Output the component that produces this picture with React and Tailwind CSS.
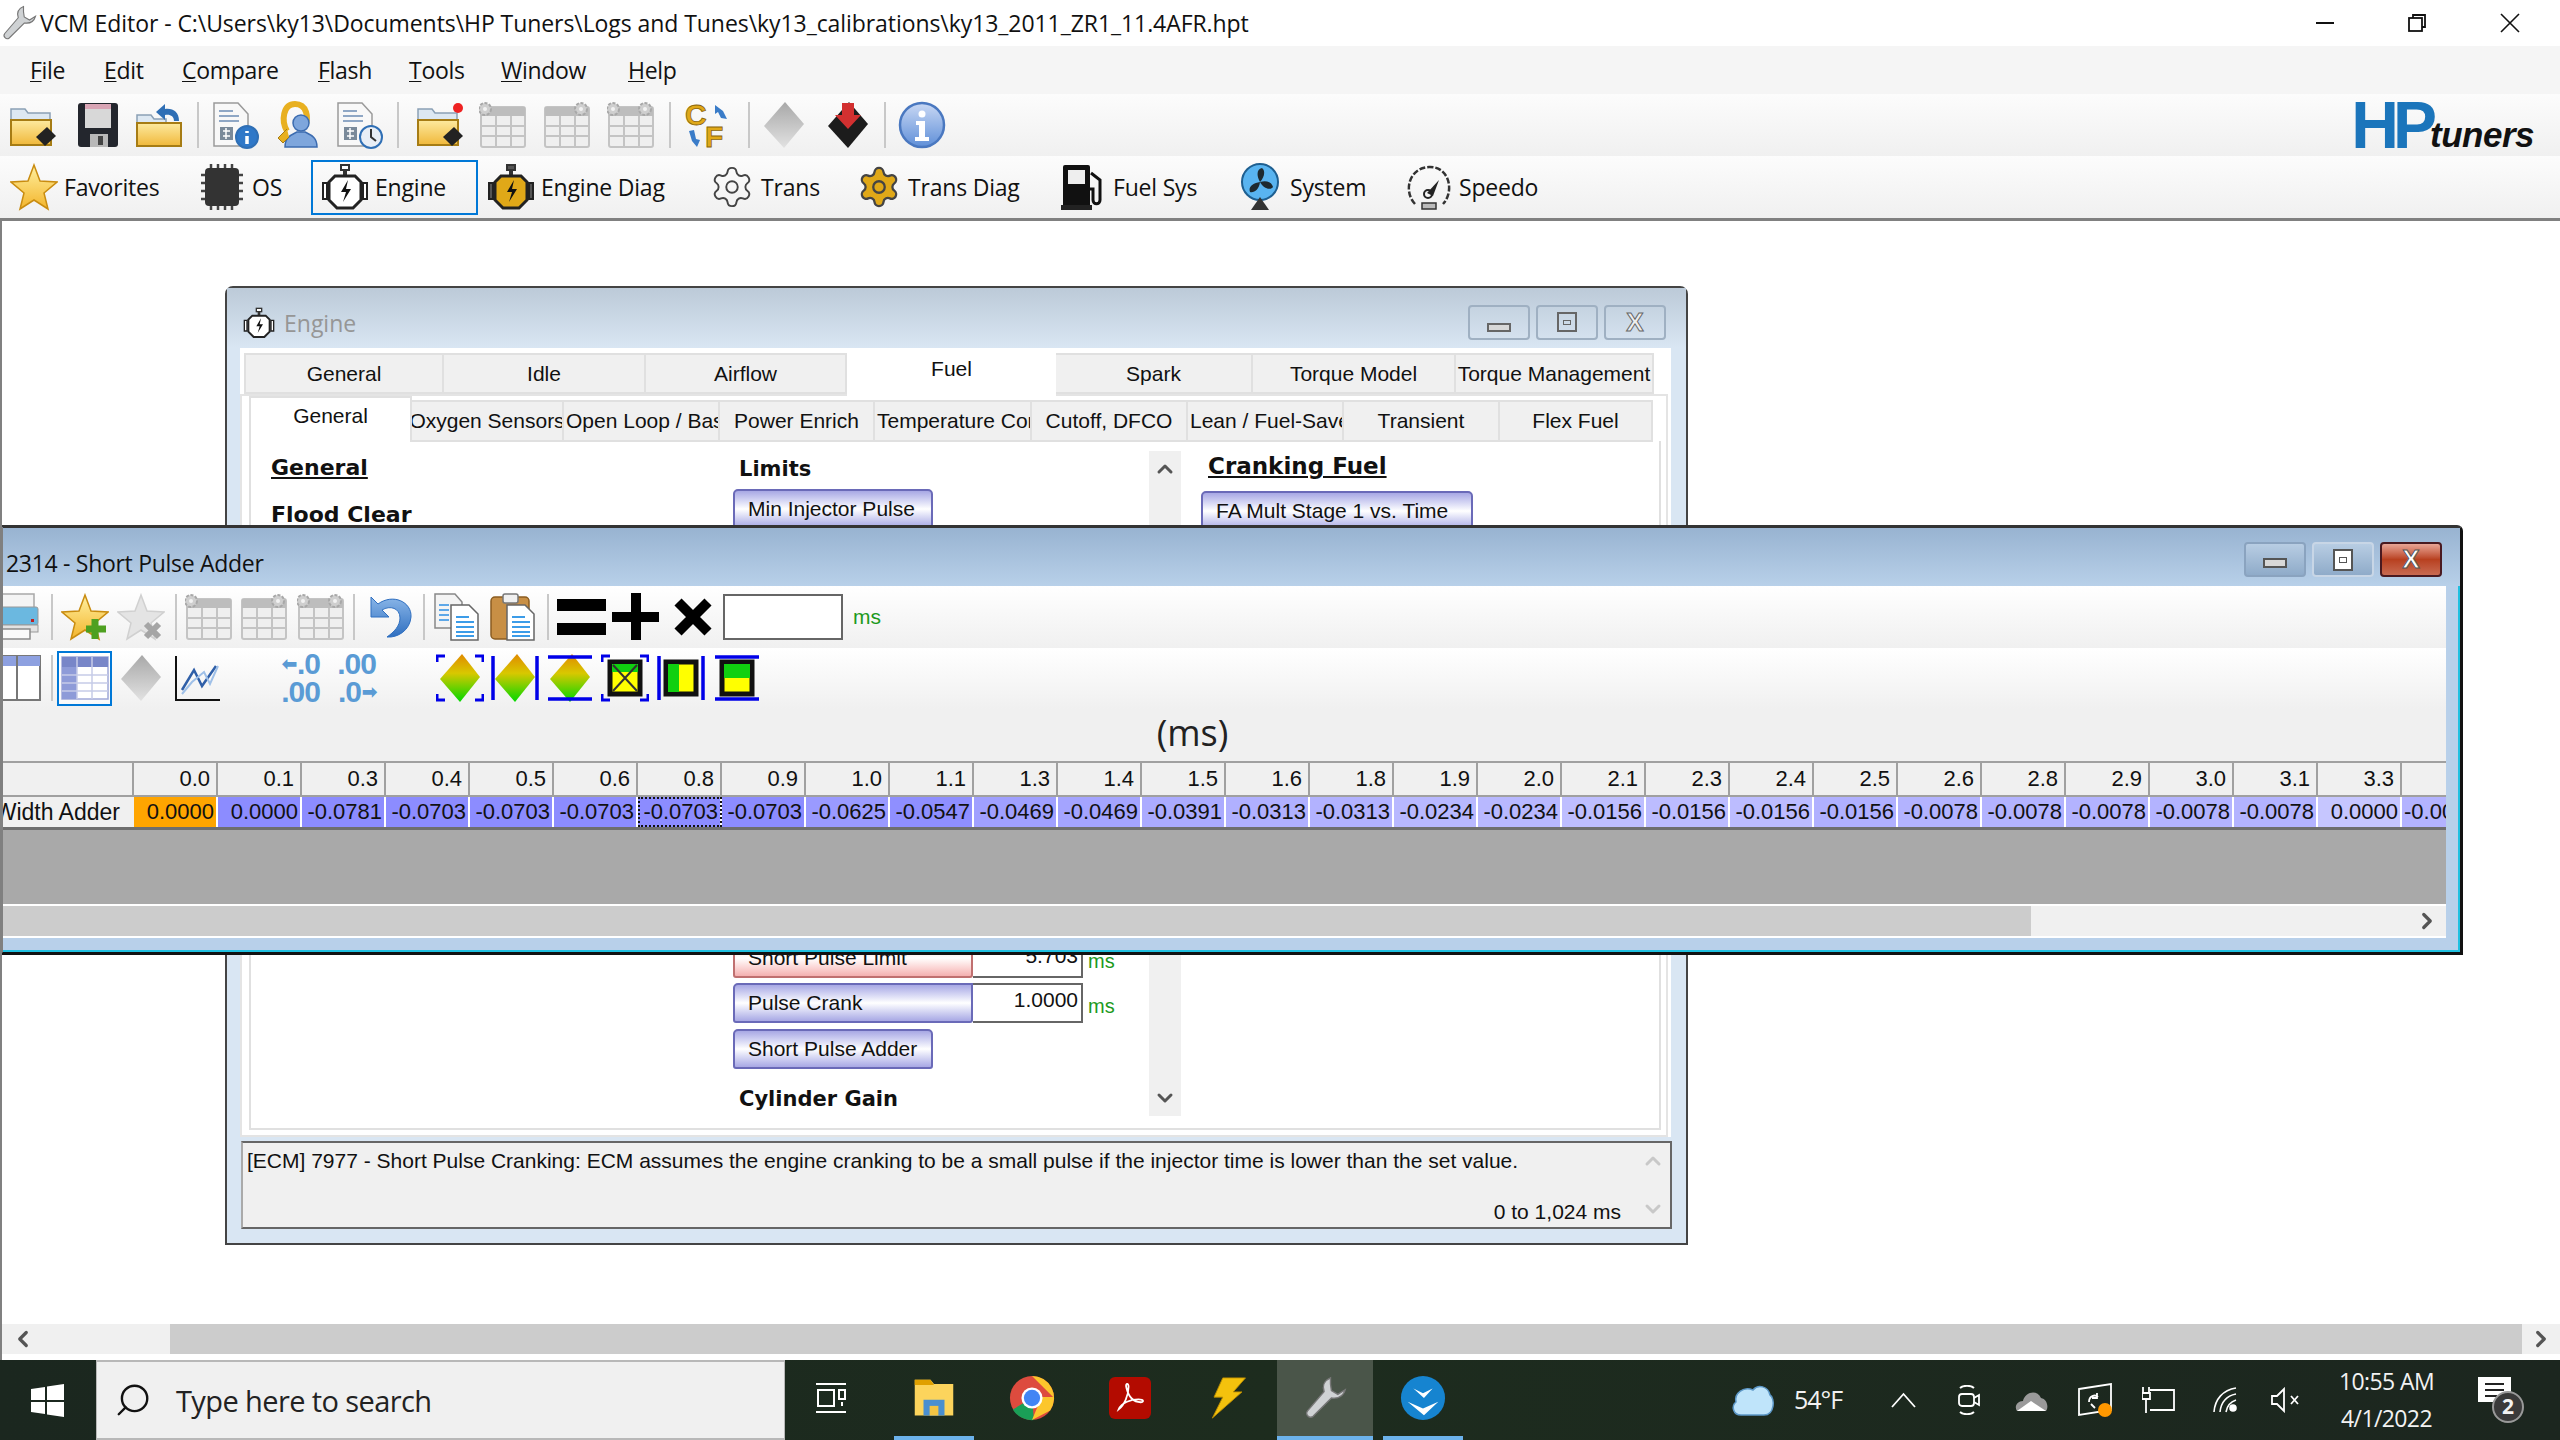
import React from 'react';
import { ChevronUp, ChevronDown, ChevronLeft, ChevronRight, Settings, Search } from 'lucide-react';

const Ic = ({ className = 'w-12 h-12', children }) => (
  <svg viewBox="0 0 48 48" className={`shrink-0 ${className}`}>{children}</svg>
);

const Defs = () => (
  <svg className="absolute w-0 h-0">
    <defs>
      <linearGradient id="folder" x1="0" y1="0" x2="0" y2="1"><stop offset="0" stopColor="#fdeaa0" /><stop offset="1" stopColor="#f0b83a" /></linearGradient>
      <linearGradient id="star" x1="0" y1="0" x2="0" y2="1"><stop offset="0" stopColor="#fff0a0" /><stop offset="1" stopColor="#f3b52c" /></linearGradient>
      <linearGradient id="heat" x1="0" y1="0" x2="0" y2="1"><stop offset="0" stopColor="#e08a00" /><stop offset="0.4" stopColor="#d8c800" /><stop offset="1" stopColor="#00d800" /></linearGradient>
      <linearGradient id="grayChip" x1="0" y1="0" x2="0" y2="1"><stop offset="0" stopColor="#a8a8a8" /><stop offset="1" stopColor="#e2e2e2" /></linearGradient>
      <linearGradient id="info" x1="0" y1="0" x2="0" y2="1"><stop offset="0" stopColor="#c9d8f4" /><stop offset="1" stopColor="#5f8fd8" /></linearGradient>
      <linearGradient id="undo" x1="0" y1="0" x2="0" y2="1"><stop offset="0" stopColor="#8ab6e8" /><stop offset="1" stopColor="#2f6fc0" /></linearGradient>
    </defs>
  </svg>
);

const FolderOpen = ({ spark }) => (
  <Ic>
    <path d="M2 8h14l3 4h22v14H2z" fill="#dde8f2" stroke="#8aa0b5" strokeWidth="1.5" />
    <rect x="2" y="19" width="40" height="25" fill="url(#folder)" stroke="#a67c14" strokeWidth="2" />
    <polygon points="27,36 38,26 47,35 36,45" fill="#222" />
    {spark && <circle cx="42" cy="7" r="5" fill="#ee2222" />}
  </Ic>
);
const Save = () => (
  <Ic>
    <rect x="4" y="2" width="40" height="44" rx="3" fill="#23262d" />
    <rect x="11" y="3" width="26" height="24" fill="#d8d8d8" />
    <rect x="11" y="3" width="26" height="5" fill="#d9a5b5" />
    <rect x="16" y="33" width="18" height="13" fill="#b8b8b8" />
    <rect x="24" y="35" width="5" height="9" fill="#444" />
  </Ic>
);
const FolderBack = () => (
  <Ic>
    <path d="M2 14h14l3 4h12v8H2z" fill="#dde8f2" stroke="#8aa0b5" strokeWidth="1.5" />
    <rect x="2" y="22" width="44" height="23" fill="url(#folder)" stroke="#a67c14" strokeWidth="2" />
    <path d="M44 20c0-9-6-13-14-12V3l-9 8 9 8v-5c5-1 9 1 9 6z" fill="#2f6fb5" />
  </Ic>
);
const DocBadge = ({ clock }) => (
  <Ic>
    <path d="M3 2h24l10 11v32H3z" fill="#f8f8f8" stroke="#9a9a9a" strokeWidth="1.5" />
    <path d="M8 10h14M8 15h20M8 20h20" stroke="#8fa7c5" strokeWidth="2" />
    <rect x="9" y="26" width="13" height="13" fill="#7a8a9a" />
    <path d="M12 30h7M12 35h7M15 27v11" stroke="#fff" strokeWidth="1.5" />
    <circle cx="36" cy="36" r="11" fill={clock ? '#e8eef6' : '#2f78c8'} stroke="#2f6fb5" strokeWidth="2" />
    {clock ? <path d="M36 28v8l5 4" stroke="#333" strokeWidth="2" fill="none" /> : <path d="M36 30v2M36 35v8" stroke="#fff" strokeWidth="3.5" />}
  </Ic>
);
const KeyUser = () => (
  <Ic>
    <path d="M14 30C8 20 10 3 22 3s14 14 10 22" fill="none" stroke="#e8b020" strokeWidth="6" />
    <circle cx="28" cy="22" r="8" fill="#7ea6dc" stroke="#3c6cb0" strokeWidth="1.5" />
    <path d="M12 46c0-10 6-12 12-15h8c6 3 12 5 12 15z" fill="#7ea6dc" stroke="#3c6cb0" strokeWidth="1.5" />
    <path d="M14 28l-9 9 5 5 6-6" fill="#e8b020" stroke="#a67c14" />
  </Ic>
);
const GrayTable = ({ gears = [] }) => (
  <Ic>
    <rect x="2" y="6" width="44" height="40" rx="2" fill="#efefef" stroke="#c4c4c4" strokeWidth="2" />
    <rect x="2" y="6" width="44" height="9" fill="#bdbdbd" />
    <path d="M2 25h44M2 35h44M17 15v30M32 15v30" stroke="#c4c4c4" strokeWidth="2" />
    {gears.map((x) => (
      <g key={x}>
        <circle cx={x} cy="8" r="6" fill="#cfcfcf" stroke="#a8a8a8" strokeWidth="2" strokeDasharray="3 1.5" />
        <circle cx={x} cy="8" r="2" fill="#f2f2f2" />
      </g>
    ))}
  </Ic>
);
const CF = () => (
  <Ic>
    <text x="0" y="24" fontFamily="Liberation Sans" fontWeight="700" fontSize="30" fill="#e0a818" stroke="#8a6508" strokeWidth="0.8">C</text>
    <text x="20" y="46" fontFamily="Liberation Sans" fontWeight="700" fontSize="30" fill="#e0a818" stroke="#8a6508" strokeWidth="0.8">F</text>
    <path d="M30 4l8 6 4 8-6-1-3-6-3 2z" fill="#3a7cc8" />
    <path d="M4 30l3 10 5 6 3-7-4-1-2-9z" fill="#3a7cc8" />
  </Ic>
);
const ChipDiamond = ({ red, gray, className }) => (
  <Ic className={className}>
    <polygon points="25,1 44,23 24,47 4,25" fill={red ? '#1c1c1c' : gray ? 'url(#grayChip)' : '#999'} />
    {red && <path d="M18 2h12v12h7L24 28 11 14h7z" fill="#d23030" />}
  </Ic>
);
const Info = () => (
  <Ic>
    <circle cx="24" cy="24" r="22" fill="url(#info)" stroke="#4a78c0" strokeWidth="2.5" />
    <circle cx="24" cy="13" r="3.5" fill="#fff" />
    <path d="M18 20h9v16h4v4H17v-4h4V24h-3z" fill="#fff" />
  </Ic>
);
const Star = ({ gray, badge }) => (
  <Ic>
    <polygon points="24,2 30,18 47,19 34,30 38,46 24,37 10,46 14,30 1,19 18,18" fill={gray ? '#e4e4e4' : 'url(#star)'} stroke={gray ? '#d0d0d0' : '#c98c10'} strokeWidth="1.5" />
    {badge === 'plus' && <path d="M34 26v20M25 36h20" stroke="#4ea020" strokeWidth="7" />}
    {badge === 'x' && <path d="M29 31l13 13M42 31L29 44" stroke="#a5a5a5" strokeWidth="6" />}
  </Ic>
);
const Chip = () => (
  <Ic>
    <rect x="7" y="5" width="34" height="38" rx="4" fill="#333" />
    <path d="M13 1v4M20 1v4M27 1v4M34 1v4M13 43v4M20 43v4M27 43v4M34 43v4M3 12h4M3 20h4M3 28h4M3 36h4M41 12h4M41 20h4M41 28h4M41 36h4" stroke="#444" strokeWidth="2.5" />
  </Ic>
);
const EngineIcon = ({ gold, className }) => (
  <Ic className={className}>
    <rect x="20" y="2" width="8" height="5" fill={gold ? '#555' : '#fff'} stroke="#333" strokeWidth="2" />
    <rect x="22" y="7" width="4" height="6" fill="#333" />
    <path d="M14 13h20l6 6v18l-8 8H16l-8-8V19z" fill={gold ? '#e0a818' : '#fff'} stroke="#222" strokeWidth="3" />
    <path d="M2 20h4v16H2zM42 20h4v16h-4z" fill={gold ? '#555' : '#fff'} stroke="#222" strokeWidth="2" />
    <path d="M27 17l-7 12h5l-3 10 8-13h-5z" fill="#111" />
  </Ic>
);
const Fuel = () => (
  <Ic>
    <rect x="4" y="2" width="27" height="43" rx="2" fill="#111" />
    <rect x="9" y="7" width="17" height="14" fill="#eee" />
    <rect x="2" y="42" width="31" height="5" fill="#222" />
    <path d="M32 10l9 7v20c0 5-7 5-7 0V26h-3" fill="none" stroke="#111" strokeWidth="3" />
  </Ic>
);
const Fan = () => (
  <Ic>
    <circle cx="24" cy="19" r="18" fill="#59b4f0" stroke="#1e5f90" strokeWidth="2" />
    <path d="M24 19C20 12 21 6 26 5c4 3 2 10-2 14zM24 19c8-2 12 1 13 5-3 4-10 1-13-5zM24 19c-1 8-6 11-10 10-2-5 3-9 10-10z" fill="#1e2a30" />
    <polygon points="24,34 33,47 15,47" fill="#333" />
  </Ic>
);
const Speedo = () => (
  <Ic>
    <path d="M10 41C-2 28 4 5 24 4s26 24 14 37" fill="none" stroke="#333" strokeWidth="2.5" strokeDasharray="6 2" />
    <path d="M22 30l12-13-6 16z" fill="#222" />
    <circle cx="23" cy="31" r="4" fill="none" stroke="#222" strokeWidth="2" />
    <rect x="17" y="40" width="14" height="6" fill="#bbb" stroke="#333" strokeWidth="1.5" />
  </Ic>
);
const Printer = () => (
  <Ic>
    <rect x="-6" y="1" width="40" height="14" fill="#f4f4f4" stroke="#a8a8a8" strokeWidth="1.5" />
    <rect x="-10" y="14" width="48" height="18" rx="2" fill="#6bb8e0" stroke="#999" />
    <rect x="-10" y="32" width="48" height="7" fill="#e2e2e2" stroke="#999" />
    <rect x="-6" y="36" width="36" height="10" fill="#fafafa" stroke="#8a8a8a" strokeWidth="1.5" />
    <rect x="31" y="26" width="3" height="3" fill="#c02020" />
  </Ic>
);
const Undo = () => (
  <Ic>
    <path d="M6 4l0 20 18 0-7-7c8-5 18-2 18 8 0 8-6 14-13 19 11 1 23-7 24-20C47 9 28 0 13 11z" fill="url(#undo)" stroke="#2f6fc0" strokeWidth="1" />
  </Ic>
);
const DocLines = ({ x, y }) => (
  <g transform={`translate(${x} ${y})`}>
    <path d="M0 0h18l9 9v26H0z" fill="#fff" stroke="#666" strokeWidth="1.5" />
    <path d="M5 12h13M5 17h18M5 22h18M5 27h18M5 31h18" stroke="#3c9ce8" strokeWidth="2" />
  </g>
);
const Copy = () => (
  <Ic>
    <path d="M1 1h20l7 8v26H1z" fill="#f4f4f4" stroke="#888" strokeWidth="1.5" />
    <path d="M5 12h10M5 17h10M5 22h10M5 27h10" stroke="#5ea8e8" strokeWidth="2" />
    <DocLines x="17" y="12" />
  </Ic>
);
const Paste = () => (
  <Ic>
    <rect x="1" y="4" width="38" height="42" rx="4" fill="#c88f45" stroke="#8a5c20" strokeWidth="1.5" />
    <rect x="13" y="1" width="15" height="9" rx="2" fill="#f0f0f0" stroke="#777" strokeWidth="1.5" />
    <DocLines x="17" y="12" />
  </Ic>
);
const WinSplit = () => (
  <Ic>
    <rect x="-6" y="2" width="46" height="44" fill="#fff" stroke="#777" strokeWidth="2" />
    <rect x="-6" y="2" width="46" height="10" fill="#8da0e0" />
    <path d="M17 2v44" stroke="#777" strokeWidth="2" />
  </Ic>
);
const SheetIcon = () => (
  <Ic>
    <rect x="1" y="3" width="46" height="42" fill="#fff" stroke="#a0a8d8" strokeWidth="1.5" />
    <rect x="1" y="3" width="46" height="10" fill="#7886c8" />
    <rect x="1" y="13" width="15" height="32" fill="#8e9bd8" />
    <path d="M16 3v42M31 3v42M1 21h46M1 29h46M1 37h46" stroke="#c6cce8" strokeWidth="1.5" />
  </Ic>
);
const Chart = () => (
  <Ic>
    <path d="M2 2v44h44" fill="none" stroke="#111" strokeWidth="2" />
    <path d="M8 36l12-20 8 16 14-20" fill="none" stroke="#2f5fa8" strokeWidth="2.5" />
    <path d="M8 40l10-12 12-10 6 12 8-18" fill="none" stroke="#9fc0e8" strokeWidth="2" />
  </Ic>
);
const Deci = ({ top, arrow }) => (
  <span className="flex w-[46px] h-[22px] items-center justify-end gap-[1px] text-[30px] leading-none font-bold tracking-[-1px] text-[#5a9bd5]">
    {arrow === 'left' && <span className="text-[18px]">⬅</span>}
    {top}
    {arrow === 'right' && <span className="text-[18px]">➡</span>}
  </span>
);
const Brackets = ({ kind }) => (
  <>
    {kind === 'corners' && <path d="M1 8V2h8M47 8V2h-8M1 40v6h8M47 40v6h-8" fill="none" stroke="#0000e8" strokeWidth="3" />}
    {kind === 'sides' && <path d="M2 2v44M46 2v44" stroke="#0000e8" strokeWidth="3.5" />}
    {kind === 'bars' && <path d="M2 3h44M2 45h44" stroke="#0000e8" strokeWidth="3.5" />}
  </>
);
const Heat = ({ kind }) => (
  <Ic>
    <polygon points="26,0 44,23 24,48 4,25" fill="url(#heat)" />
    <Brackets kind={kind} />
  </Ic>
);
const Sel = ({ kind, x, vert, horiz }) => (
  <Ic>
    <rect x="9" y="8" width="30" height="32" fill="#ffff00" stroke="#111" strokeWidth="5" />
    {x && <rect x="11" y="10" width="26" height="8" fill="#10d010" />}
    {x && <path d="M12 11l24 26M36 11L12 37" stroke="#333" strokeWidth="2" />}
    {vert && <rect x="11" y="10" width="11" height="28" fill="#10d010" />}
    {horiz && <rect x="11" y="10" width="26" height="14" fill="#10d010" />}
    <Brackets kind={kind} />
  </Ic>
);

const Sep = ({ className }) => <div className={`w-[2px] h-[46px] bg-[#c8c8c8] ${className}`} />;

const MAIN_MENU = ['File', 'Edit', 'Compare', 'Flash', 'Tools', 'Window', 'Help'];
const menuWidths = ['w-[74px]', 'w-[78px]', 'w-[136px]', 'w-[91px]', 'w-[92px]', 'w-[127px]', 'w-[80px]'];

const SECTIONS = [
  { label: 'Favorites', w: 'w-[188px]', icon: <Star /> },
  { label: 'OS', w: 'w-[122px]', icon: <Chip /> },
  { label: 'Engine', w: 'w-[167px]', icon: <EngineIcon />, active: true },
  { label: 'Engine Diag', w: 'w-[222px]', icon: <EngineIcon gold /> },
  { label: 'Trans', w: 'w-[147px]', icon: <Settings size={46} strokeWidth={1} color="#444" /> },
  { label: 'Trans Diag', w: 'w-[203px]', icon: <Settings size={46} strokeWidth={1.2} color="#444" fill="#e0a818" /> },
  { label: 'Fuel Sys', w: 'w-[177px]', icon: <Fuel /> },
  { label: 'System', w: 'w-[169px]', icon: <Fan /> },
  { label: 'Speedo', w: 'w-[150px]', icon: <Speedo /> },
];

const TABS_TOP = [
  { t: 'General', w: 'w-[200px]' },
  { t: 'Idle', w: 'w-[202px]' },
  { t: 'Airflow', w: 'w-[201px]' },
  { t: 'Fuel', w: 'w-[209px]', active: true },
  { t: 'Spark', w: 'w-[197px]' },
  { t: 'Torque Model', w: 'w-[203px]' },
  { t: 'Torque Management', w: 'w-[198px]' },
];
const TABS_SUB = [
  { t: 'General', w: 'w-[163px]', active: true },
  { t: 'Oxygen Sensors', w: 'w-[152px]' },
  { t: 'Open Loop / Base', w: 'w-[156px]' },
  { t: 'Power Enrich', w: 'w-[155px]' },
  { t: 'Temperature Comp', w: 'w-[157px]' },
  { t: 'Cutoff, DFCO', w: 'w-[156px]' },
  { t: 'Lean / Fuel-Save', w: 'w-[156px]' },
  { t: 'Transient', w: 'w-[156px]' },
  { t: 'Flex Fuel', w: 'w-[153px]' },
];

const AXIS = ['0.0', '0.1', '0.3', '0.4', '0.5', '0.6', '0.8', '0.9', '1.0', '1.1', '1.3', '1.4', '1.5', '1.6', '1.8', '1.9', '2.0', '2.1', '2.3', '2.4', '2.5', '2.6', '2.8', '2.9', '3.0', '3.1', '3.3'];
const VALUES = ['0.0000', '0.0000', '-0.0781', '-0.0703', '-0.0703', '-0.0703', '-0.0703', '-0.0703', '-0.0625', '-0.0547', '-0.0469', '-0.0469', '-0.0391', '-0.0313', '-0.0313', '-0.0234', '-0.0234', '-0.0156', '-0.0156', '-0.0156', '-0.0156', '-0.0078', '-0.0078', '-0.0078', '-0.0078', '-0.0078', '0.0000'];
// red/green channel of each cell, the blue one is always 255
const SHADES = [0, 0x8c, 0x8c, 0x8c, 0x8c, 0x8c, 0x8c, 0x8c, 0x9a, 0x8f, 0xa0, 0xa4, 0xab, 0xb0, 0xb2, 0xb8, 0xb8, 0xbe, 0xbc, 0xbc, 0xb0, 0xb3, 0xb3, 0xb3, 0xb3, 0xb3, 0xc6];

const cellColor = (i) => {
  if (i === 0) return '#ffa500';
  return `rgb(${SHADES[i]},${SHADES[i]},255)`;
};

const PulseButton = ({ label, className = '' }) => (
  <div className={`h-[40px] flex items-center pl-[13px] border-2 border-[#6a6ab8] rounded-t-[5px] rounded-b-[3px] bg-gradient-to-b from-[#a8a8e4] via-white to-[#a8a8e4] text-[21px] whitespace-nowrap ${className}`}>
    {label}
  </div>
);

const WinBtn = ({ children, className = '' }) => (
  <div className={`w-[62px] h-[35px] flex items-center justify-center rounded-[4px] border-2 ${className}`}>{children}</div>
);

const EngineWindow = () => (
  <div className="absolute left-[223px] top-[65px] w-[1463px] h-[959px] flex flex-col border-2 border-[#444] rounded-t-[8px] bg-[#d9e6f3]">
    <div className="h-[60px] flex items-center pl-[16px] pr-[20px] bg-gradient-to-b from-[#bccad8] to-[#d9e6f3]">
      <EngineIcon className="w-[32px] h-[32px] mt-[9px]" />
      <span className="ml-[9px] mt-[11px] text-[23px] text-[#969696] font-['Open_Sans']">Engine</span>
      <div className="ml-auto flex gap-[6px] mt-[8px]">
        <WinBtn className="border-[#9fb0c2]"><div className="w-[24px] h-[9px] mt-[10px] bg-[#d8d8d8] border-2 border-[#666]" /></WinBtn>
        <WinBtn className="border-[#9fb0c2]"><div className="w-[20px] h-[20px] border-2 border-[#666] flex items-center justify-center"><div className="w-[8px] h-[5px] border border-[#666]" /></div></WinBtn>
        <WinBtn className="border-[#9fb0c2] text-[26px] font-bold text-[#eee] [-webkit-text-stroke:1px_#666]">X</WinBtn>
      </div>
    </div>
    <div className="ml-[13px] mr-[15px] h-[789px] flex flex-col bg-white">
      <div className="h-[46px] flex pl-[4px] text-[21px]">
        {TABS_TOP.map((tab) => (
          <div key={tab.t} className={`${tab.w} flex justify-center items-center overflow-hidden whitespace-nowrap ${tab.active ? 'relative z-10 h-[48px] pb-[6px] bg-white' : 'mt-[5px] bg-[#f0f0f0] border-2 border-[#e0e0e0] border-l-0 first:border-l-2'}`}>
            {tab.t}
          </div>
        ))}
      </div>
      <div className="flex-1 flex flex-col mr-[3px] pl-[7px] pr-[5px] pt-[4px] pb-[5px] border-2 border-[#e4e4e4]">
        <div className="h-[42px] flex text-[21px]">
          {TABS_SUB.map((tab) => (
            <div key={tab.t} className={`${tab.w} overflow-hidden whitespace-nowrap flex justify-center items-center ${tab.active ? 'relative z-10 h-[46px] mt-[-4px] pb-[8px] bg-white border-2 border-b-0 border-[#e0e0e0]' : 'bg-[#f0f0f0] border-2 border-l-0 border-[#e0e0e0]'}`}>
              {tab.t.length > 14 && !tab.active ? <span className="w-full pl-[2px]">{tab.t}</span> : tab.t}
            </div>
          ))}
        </div>
        <div className="flex-1 flex border-2 border-[#e0e0e0] border-t-0 -mt-[1px]">
          <div className="w-[482px] pl-[20px] pt-[10px] font-['DejaVu_Sans'] font-bold text-[22px]">
            <div className="underline">General</div>
            <div className="mt-[14px]">Flood Clear</div>
          </div>
          <div className="w-[416px] flex flex-col pb-[14px]">
            <div className="pl-[6px] pt-[13px] font-['DejaVu_Sans'] font-bold text-[21px]">Limits</div>
            <PulseButton label="Min Injector Pulse" className="w-[200px] mt-[3px]" />
            <div className="mt-auto flex items-start">
              <PulseButton label="Short Pulse Limit" className="w-[240px] border-[#c07070] from-[#f8c8c8] to-[#f4b0b0] rounded-r-none" />
              <div className="w-[110px] h-[40px] border-2 border-l-0 border-[#666] text-right pr-[3px] text-[21px]">5.703</div>
              <span className="ml-[5px] mt-[8px] text-[20px] text-[#1d9a1d]">ms</span>
            </div>
            <div className="mt-[5px] flex items-start">
              <PulseButton label="Pulse Crank" className="w-[240px] rounded-r-none" />
              <div className="w-[110px] h-[40px] border-2 border-l-0 border-[#666] text-right pr-[3px] text-[21px] leading-[30px]">1.0000</div>
              <span className="ml-[5px] mt-[8px] text-[20px] text-[#1d9a1d]">ms</span>
            </div>
            <PulseButton label="Short Pulse Adder" className="w-[200px] mt-[6px]" />
            <div className="pl-[6px] mt-[15px] font-['DejaVu_Sans'] font-bold text-[21px] leading-[30px]">Cylinder Gain</div>
          </div>
          <div className="w-[32px] mt-[10px] mb-[12px] flex flex-col items-center justify-between py-[6px] bg-[#f0f0f0] text-[#555]">
            <ChevronUp size={24} strokeWidth={3} />
            <ChevronDown size={24} strokeWidth={3} />
          </div>
          <div className="pl-[20px] pt-[10px] flex flex-col items-start">
            <div className="ml-[7px] font-['DejaVu_Sans'] font-bold text-[23px] leading-[30px] underline">Cranking Fuel</div>
            <PulseButton label="FA Mult Stage 1 vs. Time" className="w-[272px] mt-[10px]" />
          </div>
        </div>
      </div>
    </div>
    <div className="mx-[14px] mt-[4px] h-[88px] flex border-2 border-[#666] border-l-[#aaa] bg-[#f0f0f0] text-[21px]">
      <div className="flex-1 flex flex-col justify-between pl-[4px] pr-[15px] pt-[2px]">
        <div className="whitespace-nowrap">[ECM] 7977 - Short Pulse Cranking: ECM assumes the engine cranking to be a small pulse if the injector time is lower than the set value.</div>
        <div className="text-right">0 to 1,024 ms</div>
      </div>
      <div className="w-[34px] flex flex-col items-center justify-between py-[6px] text-[#c8c8c8]">
        <ChevronUp size={24} strokeWidth={3} />
        <ChevronDown size={24} strokeWidth={3} />
      </div>
    </div>
  </div>
);

const ShortPulseWindow = () => (
  <div className="absolute -left-[2px] top-[304px] w-[2463px] h-[430px] flex flex-col border-t-[3px] border-t-[#333] border-r-[3px] border-r-[#111] border-b-[3px] border-b-[#111] border-l-[3px] border-l-[#808080] bg-[#b8d0ea] rounded-tr-[6px] shadow-[inset_-2px_0_0_#1fc0e0]">
    <div className="h-[58px] flex items-center pl-[3px] pr-[18px] bg-gradient-to-b from-[#98b3d1] to-[#b8d0e9] text-[23px] font-['Open_Sans']">
      <span className="text-[#111] mt-[12px] tracking-[-0.3px]">2314 - Short Pulse Adder</span>
      <div className="ml-auto flex gap-[6px] mt-[5px]">
        <WinBtn className="border-[#8aa3bf] bg-gradient-to-b from-[#b8cde3] to-[#8fabc9]"><div className="w-[24px] h-[10px] mt-[6px] bg-[#d8d8d8] border-2 border-[#555]" /></WinBtn>
        <WinBtn className="border-[#c8d6e6] bg-gradient-to-b from-[#b8cde3] to-[#8fabc9]"><div className="w-[20px] h-[22px] bg-white border-2 border-[#555] flex items-center justify-center"><div className="w-[8px] h-[6px] border border-[#555]" /></div></WinBtn>
        <WinBtn className="border-[#4a1a20] bg-gradient-to-b from-[#e8a595] via-[#b8401f] to-[#c86a50] text-[26px] font-bold text-white font-['Liberation_Sans'] [-webkit-text-stroke:1px_#555]">X</WinBtn>
      </div>
    </div>
    <div className="h-[352px] mr-[14px] flex flex-col bg-[#f0f0f0]">
      <div className="h-[62px] flex items-center bg-gradient-to-b from-white to-[#f0f0f0] overflow-hidden">
        <div className="-ml-[3px] flex items-center">
          <Printer />
          <Sep className="ml-[3px]" />
          <div className="ml-[8px]"><Star badge="plus" /></div>
          <div className="ml-[8px]"><Star gray badge="x" /></div>
          <Sep className="ml-[10px]" />
          <div className="ml-[8px]"><GrayTable gears={[6]} /></div>
          <div className="ml-[7px]"><GrayTable gears={[38]} /></div>
          <div className="ml-[9px]"><GrayTable gears={[6, 38]} /></div>
          <Sep className="ml-[8px]" />
          <div className="ml-[10px]"><Undo /></div>
          <Sep className="ml-[10px]" />
          <div className="ml-[9px]"><Copy /></div>
          <div className="ml-[8px]"><Paste /></div>
          <Sep className="ml-[9px]" />
          <div className="ml-[8px] w-[49px] flex flex-col gap-[12px]">
            <div className="h-[12px] bg-black" />
            <div className="h-[12px] bg-black" />
          </div>
          <div className="ml-[6px] relative w-[47px] h-[47px] flex items-center justify-center">
            <div className="w-[47px] h-[10px] bg-black" />
            <div className="absolute w-[10px] h-[47px] bg-black" />
          </div>
          <Ic className="w-[40px] h-[44px] ml-[14px]"><path d="M6 6l36 36M42 6L6 42" stroke="#000" strokeWidth="12" /></Ic>
          <div className="ml-[10px] w-[120px] h-[46px] bg-white border-2 border-[#666]" />
          <span className="ml-[10px] text-[21px] text-[#1d9a1d] font-['Liberation_Sans']">ms</span>
        </div>
      </div>
      <div className="h-[62px] flex items-center bg-gradient-to-b from-white to-[#f0f0f0] overflow-hidden">
        <div className="-ml-[3px] flex items-center font-['Liberation_Sans']">
          <WinSplit />
          <Sep className="ml-[3px]" />
          <div className="ml-[4px] w-[55px] h-[55px] flex items-center justify-center border-2 border-[#0078d7] bg-white/60"><SheetIcon /></div>
          <div className="ml-[5px]"><ChipDiamond gray /></div>
          <div className="ml-[9px]"><Chart /></div>
          <div className="ml-[52px] flex flex-col gap-[6px]"><Deci top=".0" arrow="left" /><Deci top=".00" /></div>
          <div className="ml-[10px] flex flex-col gap-[6px]"><Deci top=".00" /><Deci top=".0" arrow="right" /></div>
          <div className="ml-[60px]"><Heat kind="corners" /></div>
          <div className="ml-[7px]"><Heat kind="sides" /></div>
          <div className="ml-[7px]"><Heat kind="bars" /></div>
          <div className="ml-[7px]"><Sel kind="corners" x /></div>
          <div className="ml-[8px]"><Sel kind="sides" vert /></div>
          <div className="ml-[8px]"><Sel kind="bars" horiz /></div>
        </div>
      </div>
      <div className="h-[52px] flex items-center justify-center pr-[64px] pb-[4px] text-[36px] leading-none font-['Open_Sans'] text-[#222]">(ms)</div>
      <div className="h-[2px] bg-[#a0a0a0]" />
      <div className="grid grid-cols-[131px_repeat(27,84px)_44px] h-[32px] bg-[#f0f0f0] text-[22px] leading-[32px] overflow-hidden">
        <div className="border-r-2 border-[#a0a0a0]" />
        {AXIS.map((a) => (
          <div key={a} className="text-right pr-[6px] border-r-2 border-[#a0a0a0]">{a}</div>
        ))}
        <div />
      </div>
      <div className="h-[2px] bg-[#a0a0a0]" />
      <div className="grid grid-cols-[131px_repeat(27,84px)_44px] h-[30px] bg-white text-[22px] leading-[30px] overflow-hidden">
        <div className="bg-[#f0f0f0] pr-[14px] text-[23px] whitespace-nowrap overflow-hidden flex justify-end">Pulse Width Adder</div>
        {VALUES.map((v, i) => (
          <div key={i} style={{ backgroundColor: cellColor(i) }} className={`text-right pr-[2px] border-r-2 border-white ${i === 6 ? 'outline-2 outline-dotted outline-[#111] -outline-offset-2' : ''}`}>{v}</div>
        ))}
        <div className="bg-[#b3b3ff] pl-[2px] whitespace-nowrap overflow-hidden">-0.0078</div>
      </div>
      <div className="h-[3px] bg-[#6e6e6e]" />
      <div className="h-[75px] bg-[#a9a9a9]" />
      <div className="h-[2px] bg-white" />
      <div className="h-[30px] flex items-stretch">
        <div className="w-[2028px] bg-[#cccccc]" />
        <div className="flex-1 flex items-center justify-end pr-[6px] text-[#555]"><ChevronRight size={26} strokeWidth={3} /></div>
      </div>
      <div className="h-[2px] bg-white" />
    </div>
    <div className="flex-1 border-b-2 border-[#1fc0e0]" />
  </div>
);

const Desktop = () => (
  <div className="relative flex-1 border-l-2 border-[#808080] bg-white overflow-hidden">
    <EngineWindow />
    <ShortPulseWindow />
  </div>
);

const TaskSlot = ({ children, w = 'w-[98px]', bar, active }) => (
  <div className={`${w} h-[80px] flex flex-col items-center ${active ? 'bg-[#4a5549]' : ''}`}>
    <div className="flex-1 flex items-center justify-center">{children}</div>
    <div className={`h-[4px] ${active ? 'w-full bg-[#6cb2eb]' : bar ? 'w-[80px] bg-[#6cb2eb]' : ''}`} />
  </div>
);

const Wrench = ({ className = 'w-[44px] h-[44px]' }) => (
  <Ic className={className}>
    <path d="M30 2c-7 3-9 9-7 15L5 38c-3 4 2 9 6 6l20-20c7 1 13-2 15-9l-8 5-7-4-1-7z" fill="#cfd2d4" stroke="#777" strokeWidth="1.5" />
  </Ic>
);

const Taskbar = () => (
  <div className="h-[80px] flex items-stretch bg-gradient-to-r from-[#1b271f] via-[#1d2c1e] to-[#1c261f] text-white">
    <div className="w-[96px] flex items-center justify-center pr-[2px]">
      <svg viewBox="0 0 33 33" className="w-[33px] h-[33px]">
        <path d="M0 5l14-2v13H0zM16 2.6L33 0v16H16zM0 18h14v12L0 28zM16 18h17v15l-17-2.5z" fill="#fff" />
      </svg>
    </div>
    <div className="w-[689px] flex items-center border-y-2 border-x border-[#b8b8b8] bg-[#f0f0f0] text-[#222]">
      <Search size={38} strokeWidth={1.5} color="#111" className="ml-[17px] -scale-x-100" />
      <span className="ml-[24px] text-[29px] font-['Open_Sans'] tracking-[-0.6px] leading-none">Type here to search</span>
    </div>
    <TaskSlot w="w-[92px]">
      <svg viewBox="0 0 32 32" className="w-[32px] h-[32px]" fill="none" stroke="#fff" strokeWidth="2">
        <path d="M1 2h30M1 30h30" /><rect x="3" y="8" width="16" height="16" /><rect x="24" y="8" width="6" height="9" /><path d="M27 20v4" />
      </svg>
    </TaskSlot>
    <div className="w-[8px]" />
    <TaskSlot bar>
      <Ic className="w-[42px] h-[42px]">
        <path d="M2 3h18l4 5h22v36H2z" fill="#fcd45c" /><path d="M2 3h18l4 6H2z" fill="#e0a000" /><rect x="12" y="26" width="24" height="18" fill="#4a8fd0" /><rect x="19" y="33" width="10" height="11" fill="#f3c443" />
      </Ic>
    </TaskSlot>
    <TaskSlot>
      <Ic className="w-[46px] h-[46px]">
        <circle cx="24" cy="24" r="23" fill="#dd4b3e" />
        <path d="M24 24L4 36a23 23 0 0 0 22 11z" fill="#1a9f57" />
        <path d="M24 1a23 23 0 0 1 19 36L24 47l10-24h12z" fill="#fcc62c" />
        <circle cx="24" cy="24" r="11" fill="#fff" /><circle cx="24" cy="24" r="8.5" fill="#4285f4" />
      </Ic>
    </TaskSlot>
    <TaskSlot>
      <div className="w-[42px] h-[42px] rounded-[6px] bg-[#b30b00] flex items-center justify-center">
        <Ic className="w-[34px] h-[34px]"><path d="M8 40c8-6 14-20 14-32 0-6-5-5-3 2 3 12 10 20 20 20 5 0 5-4-3-4-10 0-24 4-28 14z" fill="none" stroke="#fff" strokeWidth="2.5" /></Ic>
      </div>
    </TaskSlot>
    <TaskSlot>
      <Ic className="w-[42px] h-[42px]"><polygon points="18,1 44,1 30,17 40,17 6,47 18,23 8,23" fill="#f4c20d" stroke="#b88a00" strokeWidth="1" /></Ic>
    </TaskSlot>
    <TaskSlot w="w-[96px]" active>
      <Wrench />
    </TaskSlot>
    <TaskSlot w="w-[100px]" bar>
      <Ic className="w-[46px] h-[46px]">
        <circle cx="24" cy="24" r="23" fill="#1684d0" /><path d="M14 14l10 5 10-5-9 10zM8 28l16 7 16-7-15 14z" fill="#fff" />
      </Ic>
    </TaskSlot>
    <div className="flex-1" />
    <div className="flex items-center text-[#f2f2f2] font-['Open_Sans']">
      <svg viewBox="0 0 44 32" className="w-[44px] h-[32px]">
        <path d="M10 31C2 31 0 22 5 18 3 9 13 2 22 6c5-6 15-4 17 5 5 3 5 20-6 20z" fill="#bfe4fa" stroke="#5d98c8" strokeWidth="1.5" />
      </svg>
      <span className="ml-[19px] w-[53px] text-[25px] tracking-[-1px] whitespace-nowrap">54°F</span>
      <svg viewBox="0 0 25 16" className="ml-[44px] w-[25px] h-[16px]" fill="none" stroke="#fff" strokeWidth="1.8"><path d="M1 15L12.5 2 24 15" /></svg>
      <svg viewBox="0 0 23 30" className="ml-[41px] w-[23px] h-[30px]" fill="none" stroke="#fff" strokeWidth="1.8">
        <path d="M3 3c3-3 11-3 14 0M3 27c3 3 11 3 14 0" /><rect x="2" y="9" width="15" height="12" rx="3" /><path d="M17 13l5-3v10l-5-3" />
      </svg>
      <svg viewBox="0 0 33 26" className="ml-[35px] w-[33px] h-[26px]">
        <path d="M2 24c-3-4 0-10 6-10 2-9 14-12 18-3 6 1 8 9 5 13z" fill="#9a9a9a" /><path d="M2 24l14-10 15 10z" fill="#fff" />
      </svg>
      <svg viewBox="0 0 34 34" className="ml-[30px] w-[34px] h-[34px]" fill="none" stroke="#fff" strokeWidth="1.8">
        <path d="M1 6l32-5v26l-32 5z" /><path d="M11 19c0-6 6-8 9-5M19 10v5h-5M13 21l4 4" />
        <circle cx="27" cy="27" r="7" fill="#ff9800" stroke="none" />
      </svg>
      <svg viewBox="0 0 34 28" className="ml-[30px] w-[34px] h-[28px]" fill="none" stroke="#fff" strokeWidth="1.8">
        <path d="M8 4h24v20H8" /><path d="M1 1v6M7 1v6M0 7h8v6H0zM4 13v14" />
      </svg>
      <svg viewBox="0 0 24 26" className="ml-[37px] w-[24px] h-[26px]" fill="none" stroke="#fff" strokeWidth="1.6">
        <path d="M1 25C2 12 10 3 23 1M7 25C8 16 13 9 23 7M13 25c1-6 4-10 10-12" /><circle cx="20" cy="21" r="3" fill="#fff" />
      </svg>
      <svg viewBox="0 0 28 26" className="ml-[34px] w-[28px] h-[26px]" fill="none" stroke="#fff" strokeWidth="1.8">
        <path d="M1 9h5l7-7v22l-7-7H1zM20 9l7 8M27 9l-7 8" />
      </svg>
      <div className="ml-[38px] w-[99px] flex flex-col items-center text-[23px] leading-[37px] tracking-[-0.6px] whitespace-nowrap">
        <span>10:55 AM</span>
        <span>4/1/2022</span>
      </div>
      <div className="relative ml-[42px] mr-[36px] w-[46px] h-[46px]">
        <svg viewBox="0 0 33 28" className="w-[33px] h-[28px]" fill="#fff"><path d="M0 0h33v25H0z" /><path d="M7 7h19M7 13h19M7 19h12" stroke="#222" strokeWidth="2" /></svg>
        <div className="absolute right-0 bottom-0 w-[32px] h-[32px] rounded-full bg-[#3a3a3a] border-2 border-[#999] flex items-center justify-center text-[21px] font-bold">2</div>
      </div>
    </div>
  </div>
);

const App = () => (
  <div className="w-[2560px] h-[1440px] flex flex-col overflow-hidden bg-white text-[#111] font-['Liberation_Sans',sans-serif]">
    <Defs />
    {/* Title bar */}
    <div className="h-[46px] flex items-center bg-white shrink-0">
      <Wrench className="w-[36px] h-[36px] ml-[1px]" />
      <span className="ml-[3px] text-[23px] font-['Open_Sans'] whitespace-nowrap tracking-[-0.07px]">VCM Editor - C:\Users\ky13\Documents\HP Tuners\Logs and Tunes\ky13_calibrations\ky13_2011_ZR1_11.4AFR.hpt</span>
      <div className="ml-auto flex items-center mr-[40px]">
        <div className="w-[18px] h-[2px] bg-[#111] mr-[73px]" />
        <svg viewBox="0 0 20 20" className="w-[20px] h-[20px] mr-[73px]" fill="none" stroke="#111" strokeWidth="1.8"><rect x="2" y="5" width="13" height="13" /><path d="M6 5V2h12v12h-3" /></svg>
        <svg viewBox="0 0 20 20" className="w-[20px] h-[20px]" fill="none" stroke="#111" strokeWidth="1.6"><path d="M1 1l18 18M19 1L1 19" /></svg>
      </div>
    </div>
    {/* Menu */}
    <div className="h-[48px] flex items-center pl-[30px] bg-[#f5f5f5] shrink-0 text-[23px] font-['Open_Sans'] tracking-[-0.3px]">
      {MAIN_MENU.map((m, i) => (
        <span key={m} className={menuWidths[i]}>
          <span className="underline decoration-1 underline-offset-2 [text-decoration-skip-ink:none]">{m[0]}</span>{m.slice(1)}
        </span>
      ))}
    </div>
    {/* Main toolbar */}
    <div className="h-[62px] flex items-center shrink-0 bg-gradient-to-b from-[#fcfcfc] to-[#f0f0f0]">
      <div className="ml-[9px] flex items-center">
        <FolderOpen />
        <div className="ml-[17px]"><Save /></div>
        <div className="ml-[13px]"><FolderBack /></div>
        <Sep className="ml-[14px]" />
        <div className="ml-[12px]"><DocBadge /></div>
        <div className="ml-[14px]"><KeyUser /></div>
        <div className="ml-[14px]"><DocBadge clock /></div>
        <Sep className="ml-[14px]" />
        <div className="ml-[17px]"><FolderOpen spark /></div>
        <div className="ml-[15px]"><GrayTable gears={[6]} /></div>
        <div className="ml-[16px]"><GrayTable gears={[38]} /></div>
        <div className="ml-[16px]"><GrayTable gears={[6, 38]} /></div>
        <Sep className="ml-[14px]" />
        <div className="ml-[14px]"><CF /></div>
        <Sep className="ml-[15px]" />
        <div className="ml-[10px]"><ChipDiamond gray /></div>
        <div className="ml-[16px]"><ChipDiamond red /></div>
        <Sep className="ml-[12px]" />
        <div className="ml-[12px]"><Info /></div>
      </div>
      <div className="ml-auto mr-[26px] flex items-end h-[48px] overflow-hidden">
        <span className="text-[66px] leading-[48px] font-bold text-[#1b75bb] tracking-[-6px] h-[48px] flex items-center">HP</span>
        <span className="ml-[-1px] text-[35px] leading-[28px] font-bold italic text-[#111] tracking-[-0.5px]">tuners</span>
      </div>
    </div>
    {/* Section toolbar */}
    <div className="h-[62px] flex items-center pl-[10px] shrink-0 bg-gradient-to-b from-[#fcfcfc] to-[#f0f0f0] text-[23px] font-['Open_Sans'] tracking-[-0.2px]">
      {SECTIONS.map((s) => (
        <div key={s.label} className={`${s.w} shrink-0 h-[55px] flex items-center ${s.active ? 'border-2 border-[#0078d7] pl-[8px] -ml-[9px] mr-[9px]' : ''}`}>
          {s.icon}
          <span className="ml-[6px] whitespace-nowrap">{s.label}</span>
        </div>
      ))}
    </div>
    <div className="h-[3px] bg-[#808080] shrink-0" />
    <Desktop />
    {/* MDI scrollbar */}
    <div className="h-[36px] flex flex-col border-l-2 border-[#808080] shrink-0 bg-white">
      <div className="h-[30px] flex items-stretch bg-[#f0f0f0] text-[#555]">
        <div className="w-[168px] flex items-center pl-[8px]"><ChevronLeft size={26} strokeWidth={3} /></div>
        <div className="w-[2352px] bg-[#cccccc]" />
        <div className="flex-1 flex items-center justify-center"><ChevronRight size={26} strokeWidth={3} /></div>
      </div>
    </div>
    <Taskbar />
  </div>
);

export default App;
